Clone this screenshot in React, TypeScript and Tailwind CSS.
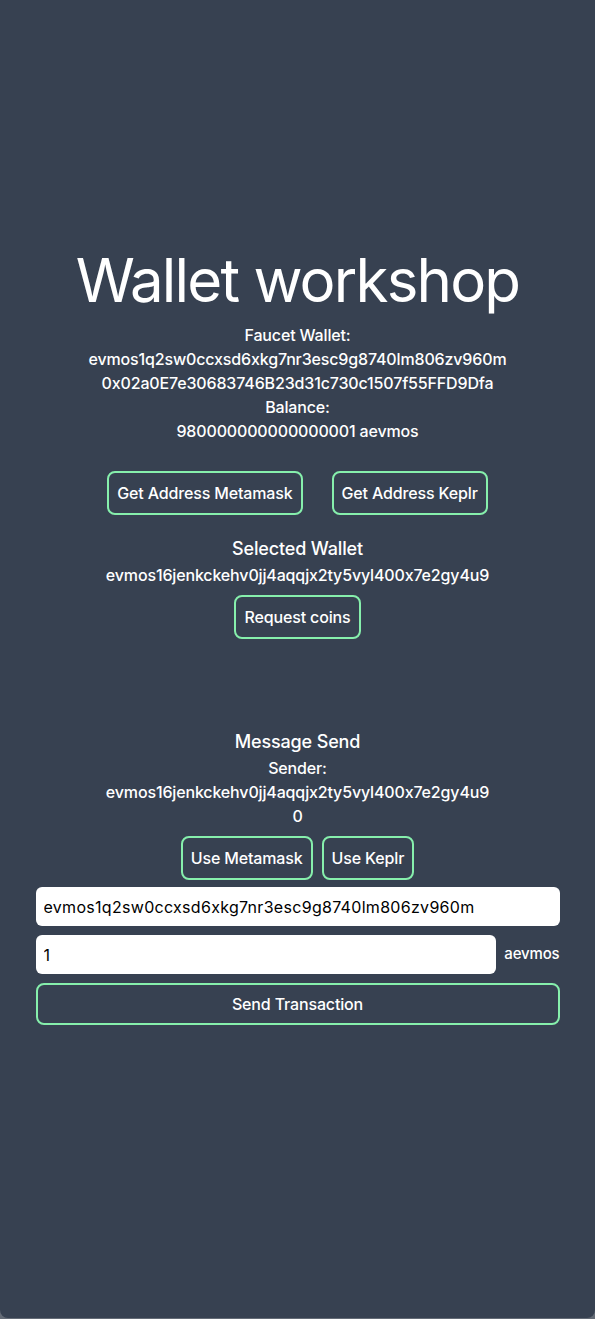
import React from "react";

const btn =
  "rounded-lg border-2 border-[#86efac] px-2 py-2 text-base leading-6 text-white";

export default function App() {
  return (
    <div
      className="bg-[#646b76] min-h-[1319px] [font-feature-settings:'calt'_0]"
      style={{ fontFamily: "Inter, 'Noto Sans', sans-serif" }}
    >
      <main className="flex h-[1318px] flex-col items-center rounded-b-lg bg-[#374151] pt-[250px] font-medium tracking-[-0.15px] text-white">
        <h1 className="text-6xl font-normal leading-[60px] tracking-[-1.8px]">Wallet workshop</h1>
        <div className="mt-[13px] flex flex-col items-center text-base leading-6">
          <p>Faucet Wallet:</p>
          <p>evmos1q2sw0ccxsd6xkg7nr3esc9g8740lm806zv960m</p>
          <p>0x02a0E7e30683746B23d31c730c1507f55FFD9Dfa</p>
          <p>Balance:</p>
          <p>980000000000000001 aevmos</p>
        </div>
        <div className="mt-7 flex gap-[29px]">
          <button className={btn}>Get Address Metamask</button>
          <button className={btn}>Get Address Keplr</button>
        </div>
        <h2 className="mt-5 text-lg leading-7">Selected Wallet</h2>
        <p className="text-base leading-6">evmos16jenkckehv0jj4aqqjx2ty5vyl400x7e2gy4u9</p>
        <button className={btn + " mt-2"}>Request coins</button>
        <h2 className="mt-[89px] text-lg leading-7">Message Send</h2>
        <div className="flex flex-col items-center text-base leading-6">
          <p>Sender:</p>
          <p>evmos16jenkckehv0jj4aqqjx2ty5vyl400x7e2gy4u9</p>
          <p>0</p>
        </div>
        <div className="mt-2 flex gap-[9px]">
          <button className={btn}>Use Metamask</button>
          <button className={btn}>Use Keplr</button>
        </div>
        <div className="mt-[7px] flex w-[524px] flex-col gap-[9px]">
          <input
            className="h-[39px] w-full rounded-md bg-white px-2 text-base font-normal tracking-[0.3px] text-black outline-none"
            defaultValue="evmos1q2sw0ccxsd6xkg7nr3esc9g8740lm806zv960m"
          />
          <div className="flex items-center gap-2">
            <input
              className="h-[39px] flex-1 rounded-md bg-white px-2 text-base font-normal tracking-[0.3px] text-black outline-none"
              defaultValue="1"
            />
            <span className="text-[15px]">aevmos</span>
          </div>
          <button className="h-[42px] w-full rounded-lg border-2 border-[#86efac] text-base font-medium text-white">
            Send Transaction
          </button>
        </div>
      </main>
    </div>
  );
}
